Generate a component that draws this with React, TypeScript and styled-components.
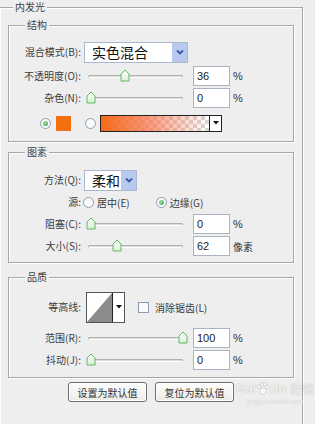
import * as React from 'react'
import styled, { createGlobalStyle } from 'styled-components'

const GlobalStyle = createGlobalStyle`
  html, body {
    margin: 0;
    padding: 0;
    background: #efeeef;
  }
  body {
    font-family: "Noto Sans CJK SC", "Liberation Sans", sans-serif;
    font-size: 10px;
    color: #3a3a3a;
  }
`

const Page = styled.div`
  position: relative;
  width: 315px;
  height: 424px;
  overflow: hidden;
  padding-top: 7px;
  box-sizing: border-box;
  background: #efeeef;
`

const Outer = styled.section`
  position: relative;
  margin-left: -1px;
  width: 304px;
  height: 440px;
  box-sizing: border-box;
  border: 1px solid #a6a6a6;
  box-shadow: inset 1px 1px 0 #fff, 1px 1px 0 #fff;
  padding: 17px 8px 0 8px;
`

const Group = styled.section<{ $mt?: number; $pt: number; $pb: number }>`
  position: relative;
  margin-top: ${p => p.$mt || 0}px;
  padding: ${p => p.$pt}px 0 ${p => p.$pb}px 0;
  border: 1px solid #a6a6a6;
  box-shadow: inset 1px 1px 0 #fff, 1px 1px 0 #fff;
`

const Title = styled.span<{ $left: number }>`
  position: absolute;
  top: -8px;
  left: ${p => p.$left}px;
  padding: 0 2px;
  line-height: 14px;
  font-size: 10px;
  background: #efeeef;
  color: #444;
`

const Row = styled.div<{ $h?: number; $mt?: number }>`
  display: flex;
  align-items: center;
  height: ${p => p.$h || 22}px;
  margin-top: ${p => p.$mt || 0}px;
`

const Label = styled.span`
  flex: none;
  width: 72px;
  text-align: right;
  white-space: nowrap;
  line-height: 14px;
`

const Select = styled.div<{ $w: number }>`
  display: flex;
  margin-left: 3px;
  width: ${p => p.$w}px;
  height: 21px;
  box-sizing: border-box;
  border: 1px solid #a9b8cf;
  background: #fff;
`

const SelectValue = styled.span`
  flex: 1;
  padding-left: 7px;
  font-size: 14px;
  line-height: 19px;
  color: #111;
`

const SelectArrow = styled.span`
  display: flex;
  align-items: center;
  justify-content: center;
  width: 15px;
  background: #b8c8ee;
`

const Track = styled.div`
  position: relative;
  margin-left: 7px;
  width: 95px;
  height: 14px;

  &::before {
    content: '';
    position: absolute;
    left: 0;
    right: 0;
    top: 6px;
    height: 1px;
    border-radius: 2px;
    border: 1px solid #b3b3b3;
    border-bottom-color: #fff;
    background: #dcdcdc;
  }
`

const Thumb = styled.svg`
  position: absolute;
  top: 0;
`

const NumberBox = styled.div`
  margin-left: 10px;
  width: 37px;
  height: 20px;
  box-sizing: border-box;
  border: 1px solid #a9b4c3;
  background: #fff;
  padding-left: 3px;
  font-family: "Liberation Sans", Arial, sans-serif;
  font-size: 11px;
  line-height: 18px;
  color: #222;
`

const Unit = styled.span<{ $cjk?: boolean }>`
  margin-left: 3px;
  font-family: ${p => (p.$cjk ? '"Noto Sans CJK SC", sans-serif' : '"Liberation Sans", Arial, sans-serif')};
  font-size: ${p => (p.$cjk ? 10 : 11)}px;
  color: #333;
`

const Radio = styled.span<{ $on?: boolean; $ml: number }>`
  flex: none;
  display: flex;
  align-items: center;
  justify-content: center;
  margin-left: ${p => p.$ml}px;
  width: 11px;
  height: 11px;
  box-sizing: border-box;
  border-radius: 50%;
  border: 1px solid #8d9db3;
  background: #fafafa;

  &::after {
    content: '';
    display: ${p => (p.$on ? 'block' : 'none')};
    width: 5px;
    height: 5px;
    border-radius: 50%;
    background: radial-gradient(circle at 40% 35%, #9fe39f, #2f9e3a);
  }
`

const OptionText = styled.span<{ $ml?: number }>`
  margin-left: ${p => p.$ml || 3}px;
  white-space: nowrap;
`

const Swatch = styled.span`
  margin-left: 5px;
  width: 15px;
  height: 15px;
  background: #f4700e;
`

const GradientBox = styled.div`
  display: flex;
  margin-left: 4px;
  width: 122px;
  height: 17px;
  box-sizing: border-box;
  border: 1px solid #222;
`

const GradientFill = styled.span`
  flex: 1;
  background:
    linear-gradient(to right, #f5691a 0%, rgba(248, 120, 80, 0.75) 45%, rgba(255, 255, 255, 0) 100%),
    repeating-conic-gradient(#d8d8d8 0 25%, #fff 0 50%) 0 0 / 8px 8px;
`

const DropButton = styled.span`
  display: flex;
  align-items: center;
  justify-content: center;
  width: 11px;
  border-left: 1px solid #222;
  background: #fff;
`

const Contour = styled.div`
  display: flex;
  margin-left: 5px;
  width: 39px;
  height: 31px;
  box-sizing: border-box;
  border: 1px solid #555;
  background: #fff;
`

const ContourPreview = styled.svg`
  flex: 1;
`

const Checkbox = styled.span`
  margin-left: 13px;
  width: 11px;
  height: 11px;
  box-sizing: border-box;
  border: 1px solid #8a9cb5;
  background: #fafafa;
`

const ButtonBar = styled.div`
  display: flex;
  gap: 8px;
  margin: 4px 0 0 60px;
`

const Button = styled.button`
  width: 79px;
  height: 20px;
  padding: 0;
  border: 1px solid #6f6f6f;
  border-radius: 3px;
  background: linear-gradient(#fdfdfd, #ecebe8);
  box-shadow: inset 0 0 0 1px #fff;
  font-family: "Noto Sans CJK SC", sans-serif;
  font-size: 10px;
  color: #333;
`

const Watermark = styled.div`
  position: absolute;
  left: 236px;
  top: 380px;
  display: flex;
  flex-direction: column;
  align-items: center;
  pointer-events: none;
`

const WatermarkLogo = styled.div`
  display: flex;
  align-items: center;
  gap: 1px;
  font-family: "Liberation Sans", Arial, sans-serif;
  font-weight: bold;
  font-size: 13px;
  color: rgba(255, 255, 255, 0.85);
  text-shadow: 0 0 1px rgba(0, 0, 0, 0.35);
`

const WatermarkCjk = styled.span`
  margin-left: 3px;
  font-family: "Noto Sans CJK SC", sans-serif;
  font-weight: normal;
  font-size: 12px;
`

const WatermarkUrl = styled.span`
  margin-top: 1px;
  font-family: "Liberation Sans", Arial, sans-serif;
  font-size: 7px;
  color: rgba(255, 255, 255, 0.75);
  text-shadow: 0 0 1px rgba(0, 0, 0, 0.25);
`

const Chevron = () => (
  <svg width="10" height="8" viewBox="0 0 10 8">
    <path d="M2 2.5 L5 5.5 L8 2.5" fill="none" stroke="#3a5aa5" strokeWidth="1.8" />
  </svg>
)

const DownTri = () => (
  <svg width="6" height="4" viewBox="0 0 6 4">
    <path d="M0 0 H6 L3 3.5 Z" fill="#111" />
  </svg>
)

const Slider = ({ pos }: { pos: number }) => (
  <Track>
    <Thumb width="10" height="13" viewBox="0 0 10 13" style={{ left: -2 + pos * 92 }}>
      <defs>
        <linearGradient id="thumbFill" x1="0" y1="0" x2="0" y2="1">
          <stop offset="0" stopColor="#ffffff" />
          <stop offset="1" stopColor="#d8f0d8" />
        </linearGradient>
      </defs>
      <path d="M1 5 L5 1 L9 5 V12 H1 Z" fill="url(#thumbFill)" stroke="#62b862" strokeWidth="1" />
    </Thumb>
  </Track>
)

const SliderRow = ({ label, pos, value, unit, mt }: { label: string; pos: number; value: string; unit: string; mt?: number }) => (
  <Row $mt={mt}>
    <Label>{label}</Label>
    <Slider pos={pos} />
    <NumberBox>{value}</NumberBox>
    <Unit $cjk={unit !== '%'}>{unit}</Unit>
  </Row>
)

const App = () => {
  return (
    <Page>
      <GlobalStyle />
      <Outer>
        <Title $left={13}>内发光</Title>

        <Group $pt={15} $pb={7}>
          <Title $left={16}>结构</Title>
          <Row>
            <Label>混合模式(B):</Label>
            <Select $w={104}>
              <SelectValue>实色混合</SelectValue>
              <SelectArrow><Chevron /></SelectArrow>
            </Select>
          </Row>
          <SliderRow label="不透明度(O):" pos={0.37} value="36" unit="%" mt={2} />
          <SliderRow label="杂色(N):" pos={0} value="0" unit="%" />
          <Row $mt={3}>
            <Radio $on $ml={31} />
            <Swatch />
            <Radio $ml={14} />
            <GradientBox>
              <GradientFill />
              <DropButton><DownTri /></DropButton>
            </GradientBox>
          </Row>
        </Group>

        <Group $mt={10} $pt={16} $pb={5}>
          <Title $left={16}>图素</Title>
          <Row>
            <Label>方法(Q):</Label>
            <Select $w={53}>
              <SelectValue>柔和</SelectValue>
              <SelectArrow><Chevron /></SelectArrow>
            </Select>
          </Row>
          <Row>
            <Label>源:</Label>
            <Radio $ml={2} />
            <OptionText>居中(E)</OptionText>
            <Radio $on $ml={26} />
            <OptionText>边缘(G)</OptionText>
          </Row>
          <SliderRow label="阻塞(C):" pos={0} value="0" unit="%" />
          <SliderRow label="大小(S):" pos={0.28} value="62" unit="像素" />
        </Group>

        <Group $mt={14} $pt={13} $pb={6}>
          <Title $left={16}>品质</Title>
          <Row $h={32}>
            <Label>等高线:</Label>
            <Contour>
              <ContourPreview viewBox="0 0 29 29" preserveAspectRatio="none">
                <polygon points="0,29 29,0 29,29" fill="#8b8b8b" />
              </ContourPreview>
              <DropButton><DownTri /></DropButton>
            </Contour>
            <Checkbox />
            <OptionText $ml={6}>消除锯齿(L)</OptionText>
          </Row>
          <SliderRow label="范围(R):" pos={1} value="100" unit="%" mt={4} />
          <SliderRow label="抖动(J):" pos={0} value="0" unit="%" />
        </Group>

        <ButtonBar>
          <Button>设置为默认值</Button>
          <Button>复位为默认值</Button>
        </ButtonBar>
      </Outer>

      <Watermark>
        <WatermarkLogo>
          <span>Bai</span>
          <svg width="12" height="13" viewBox="0 0 16 17">
            <g fill="rgba(255,255,255,0.85)" stroke="rgba(0,0,0,0.3)" strokeWidth="0.6">
              <ellipse cx="3" cy="6" rx="2" ry="2.6" />
              <ellipse cx="6.5" cy="2.8" rx="2" ry="2.6" />
              <ellipse cx="10.5" cy="2.8" rx="2" ry="2.6" />
              <ellipse cx="13.5" cy="6.5" rx="2" ry="2.6" />
              <path d="M8 8 C5 8 3 12 4 14.5 C5 16.5 11 16.5 12 14.5 C13 12 11 8 8 8 Z" />
            </g>
          </svg>
          <span>du</span>
          <WatermarkCjk>经验</WatermarkCjk>
        </WatermarkLogo>
        <WatermarkUrl>jingyan.baidu.com</WatermarkUrl>
      </Watermark>
    </Page>
  )
}

export default App
